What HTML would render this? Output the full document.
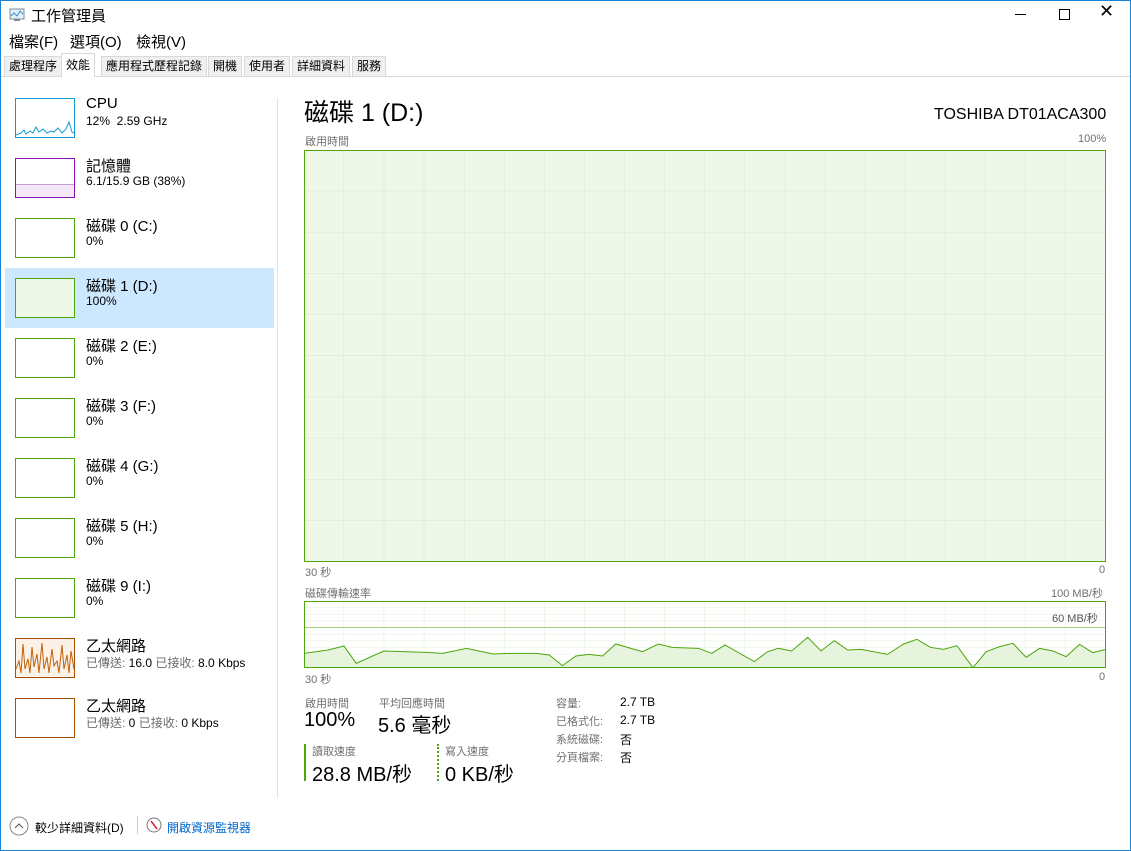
<!DOCTYPE html>
<html><head><meta charset="utf-8"><style>
*{margin:0;padding:0;box-sizing:border-box}
body{width:1131px;height:851px;position:relative;background:#fff;font-family:"Liberation Sans","Noto Sans CJK TC",sans-serif;color:#000;overflow:hidden}
.a{position:absolute;white-space:nowrap}
.win{position:absolute;left:0;top:0;width:1131px;height:851px;border:1px solid #1883d7}
.tab{position:absolute;top:56px;height:20px;font-size:12px;line-height:14px;padding:2px 4px 0;background:#f0f0f0;border:1px solid #d9d9d9;border-bottom:none}
.th{position:absolute;left:15px;width:60px;height:40px;border:1px solid #139ad3;background:#fff}
.n1{font-size:15px;left:86px}
.n2{font-size:12px;left:86px}
.g{color:#6d6d6d}
.lbl{font-size:11px;color:#707070}
</style></head><body>
<div class="win"></div>
<svg class="a" style="left:9px;top:8px" width="16" height="14"><rect x="1" y="1" width="14" height="10" fill="#e6f1f8" stroke="#7a8a99"/><polyline points="2,8 5,5 8,8 11,3 14,6" fill="none" stroke="#2b8fd6"/><rect x="5" y="11" width="6" height="2" fill="#7a8a99"/></svg>
<div class="a" style="left:31px;top:5px;font-size:15px">工作管理員</div>
<div class="a" style="left:1015px;top:14px;width:11px;height:1px;background:#000"></div>
<div class="a" style="left:1059px;top:9px;width:11px;height:11px;border:1px solid #000"></div>
<div class="a" style="left:1099px;top:1px;font-size:18px;font-weight:300">✕</div>
<div class="a" style="left:9px;top:31px;font-size:15px">檔案(F)</div>
<div class="a" style="left:70px;top:31px;font-size:15px">選項(O)</div>
<div class="a" style="left:136px;top:31px;font-size:15px">檢視(V)</div>
<div class="a" style="left:1px;top:76px;width:1129px;height:1px;background:#d9d9d9"></div>
<div class="tab" style="left:4px">處理程序</div>
<div class="tab" style="left:61px;top:53px;height:24px;background:#fff;padding-top:4px;border-color:#d9d9d9">效能</div>
<div class="tab" style="left:101px">應用程式歷程記錄</div>
<div class="tab" style="left:208px">開機</div>
<div class="tab" style="left:244px">使用者</div>
<div class="tab" style="left:292px">詳細資料</div>
<div class="tab" style="left:352px">服務</div>

<div class="a" style="left:5px;top:268px;width:269px;height:60px;background:#cce8ff"></div>
<div class="a" style="left:277px;top:98px;width:1px;height:700px;background:#e3e3e3"></div>

<div class="th" style="top:98px"><svg width="58" height="38"><polyline points="0,36 5,34 8,31 10,35 14,32 17,34 20,28 23,33 27,30 31,34 35,32 38,33 42,29 46,34 50,30 53,23 56,33 58,34" fill="none" stroke="#139ad3"/></svg></div>
<div class="a n1" style="top:95px">CPU</div><div class="a n2" style="top:114px">12%&nbsp; 2.59 GHz</div>
<div class="th" style="top:158px;border-color:#8b12ae"><div style="position:absolute;left:0;right:0;top:25px;height:13px;background:#f4e8f7;border-top:1px solid #c99bd7"></div></div>
<div class="a n1" style="top:155px">記憶體</div><div class="a n2" style="top:174px">6.1/15.9 GB (38%)</div>
<div class="th" style="top:218px;border-color:#4da60c"></div>
<div class="a n1" style="top:215px">磁碟 0 (C:)</div><div class="a n2" style="top:234px">0%</div>
<div class="th" style="top:278px;border-color:#4da60c;background:#eff7e9"></div>
<div class="a n1" style="top:275px">磁碟 1 (D:)</div><div class="a n2" style="top:294px">100%</div>
<div class="th" style="top:338px;border-color:#4da60c"></div>
<div class="a n1" style="top:335px">磁碟 2 (E:)</div><div class="a n2" style="top:354px">0%</div>
<div class="th" style="top:398px;border-color:#4da60c"></div>
<div class="a n1" style="top:395px">磁碟 3 (F:)</div><div class="a n2" style="top:414px">0%</div>
<div class="th" style="top:458px;border-color:#4da60c"></div>
<div class="a n1" style="top:455px">磁碟 4 (G:)</div><div class="a n2" style="top:474px">0%</div>
<div class="th" style="top:518px;border-color:#4da60c"></div>
<div class="a n1" style="top:515px">磁碟 5 (H:)</div><div class="a n2" style="top:534px">0%</div>
<div class="th" style="top:578px;border-color:#4da60c"></div>
<div class="a n1" style="top:575px">磁碟 9 (I:)</div><div class="a n2" style="top:594px">0%</div>
<div class="th" style="top:638px;border-color:#a74f01;background:#fbf1e7"><svg width="58" height="38"><polyline points="0,30 3,22 5,34 7,5 9,30 12,20 14,34 16,8 18,28 21,15 23,34 26,4 28,30 31,18 33,34 36,10 38,27 41,22 43,34 46,6 48,30 51,16 53,34 55,12 58,30" fill="none" stroke="#c0620a"/></svg></div>
<div class="a n1" style="top:635px">乙太網路</div><div class="a n2" style="top:654px"><span class="g">已傳送:</span> 16.0 <span class="g">已接收:</span> 8.0 Kbps</div>
<div class="th" style="top:698px;border-color:#a74f01"></div>
<div class="a n1" style="top:695px">乙太網路</div><div class="a n2" style="top:714px"><span class="g">已傳送:</span> 0 <span class="g">已接收:</span> 0 Kbps</div>

<div class="a" style="left:304px;top:93px;font-size:25px">磁碟 1 (D:)</div>
<div class="a" style="left:934px;top:106px;font-size:16px">TOSHIBA DT01ACA300</div>
<div class="a lbl" style="left:305px;top:133px">啟用時間</div>
<div class="a lbl" style="left:1078px;top:133px">100%</div>
<svg class="a" style="left:304px;top:150px" width="803" height="413">
<defs><pattern id="p" width="40.1" height="41.2" patternUnits="userSpaceOnUse"><path d="M40.1 0V41.2M0 41.2H40.1" fill="none" stroke="#d3ebc5"/></pattern></defs>
<rect x="0.5" y="0.5" width="801" height="411" fill="#eff7e9"/>
<rect x="0.5" y="0.5" width="801" height="411" fill="url(#p)"/>
<rect x="0.5" y="0.5" width="801" height="411" fill="none" stroke="#4da60c"/>
</svg>
<div class="a lbl" style="left:305px;top:564px">30 秒</div>
<div class="a lbl" style="left:1099px;top:564px">0</div>
<div class="a lbl" style="left:305px;top:585px">磁碟傳輸速率</div>
<div class="a lbl" style="left:1051px;top:585px">100 MB/秒</div>
<svg class="a" style="left:304px;top:601px" width="803" height="68">
<defs><pattern id="q" width="40.1" height="6.7" patternUnits="userSpaceOnUse"><path d="M40.1 0V6.7M0 6.7H40.1" fill="none" stroke="#dfeed6"/></pattern></defs>
<rect x="0.5" y="0.5" width="801" height="66" fill="#fff"/>
<rect x="0.5" y="0.5" width="801" height="66" fill="url(#q)"/>
<line x1="0" y1="26.5" x2="802" y2="26.5" stroke="#a3d07f"/>
</svg>
<svg class="a" style="left:0;top:0" width="1131" height="851">
<g transform="translate(288,570) scale(0.533,0.3333)">
<polygon points="30,293 30,250 75,240 105,228 128,280 180,243 260,247 290,250 335,235 385,252 420,250 465,250 490,255 515,287 540,258 565,253 590,258 615,222 665,245 695,222 720,232 770,235 795,250 820,225 875,275 900,245 920,235 945,243 975,202 1000,243 1025,212 1050,240 1075,238 1125,253 1155,222 1180,208 1205,232 1230,238 1255,227 1285,293 1310,245 1335,230 1360,220 1385,262 1410,235 1435,243 1460,260 1485,223 1510,248 1535,238 1535,293" fill="#e6f3dd" stroke="none"/>
<polyline points="30,250 75,240 105,228 128,280 180,243 260,247 290,250 335,235 385,252 420,250 465,250 490,255 515,287 540,258 565,253 590,258 615,222 665,245 695,222 720,232 770,235 795,250 820,225 875,275 900,245 920,235 945,243 975,202 1000,243 1025,212 1050,240 1075,238 1125,253 1155,222 1180,208 1205,232 1230,238 1255,227 1285,293 1310,245 1335,230 1360,220 1385,262 1410,235 1435,243 1460,260 1485,223 1510,248 1535,238" fill="none" stroke="#4da60c" stroke-width="1" vector-effect="non-scaling-stroke"/>
</g>
<rect x="304.5" y="601.5" width="801" height="66" fill="none" stroke="#4da60c"/>
</svg>
<div class="a lbl" style="left:1052px;top:610px;color:#555">60 MB/秒</div>
<div class="a lbl" style="left:305px;top:671px">30 秒</div>
<div class="a lbl" style="left:1099px;top:671px">0</div>

<div class="a lbl" style="left:305px;top:695px">啟用時間</div>
<div class="a" style="left:304px;top:709px;font-size:20px">100%</div>
<div class="a lbl" style="left:379px;top:695px">平均回應時間</div>
<div class="a" style="left:378px;top:709px;font-size:20px">5.6 毫秒</div>
<div class="a" style="left:304px;top:744px;width:2px;height:37px;background:#4da60c"></div>
<div class="a lbl" style="left:312px;top:743px">讀取速度</div>
<div class="a" style="left:312px;top:758px;font-size:20px">28.8 MB/秒</div>
<div class="a" style="left:437px;top:744px;width:0;height:37px;border-left:2px dotted #4da60c"></div>
<div class="a lbl" style="left:445px;top:743px">寫入速度</div>
<div class="a" style="left:445px;top:758px;font-size:20px">0 KB/秒</div>
<div class="a lbl" style="left:556px;top:695px">容量:</div><div class="a" style="left:620px;top:695px;font-size:12px">2.7 TB</div>
<div class="a lbl" style="left:556px;top:713px">已格式化:</div><div class="a" style="left:620px;top:713px;font-size:12px">2.7 TB</div>
<div class="a lbl" style="left:556px;top:731px">系統磁碟:</div><div class="a" style="left:620px;top:731px;font-size:12px">否</div>
<div class="a lbl" style="left:556px;top:749px">分頁檔案:</div><div class="a" style="left:620px;top:749px;font-size:12px">否</div>

<svg class="a" style="left:9px;top:816px" width="20" height="20"><circle cx="10" cy="10" r="9" fill="none" stroke="#888"/><polyline points="6,12 10,8 14,12" fill="none" stroke="#555"/></svg>
<div class="a" style="left:35px;top:819px;font-size:12px">較少詳細資料(D)</div>
<div class="a" style="left:137px;top:816px;width:1px;height:18px;background:#ccc"></div>
<svg class="a" style="left:146px;top:817px" width="16" height="16"><circle cx="8" cy="8" r="7" fill="#fff" stroke="#777"/><line x1="5" y1="4" x2="11" y2="12" stroke="#d23" stroke-width="1.5"/></svg>
<div class="a" style="left:167px;top:819px;font-size:12px;color:#0066cc">開啟資源監視器</div>
</body></html>
